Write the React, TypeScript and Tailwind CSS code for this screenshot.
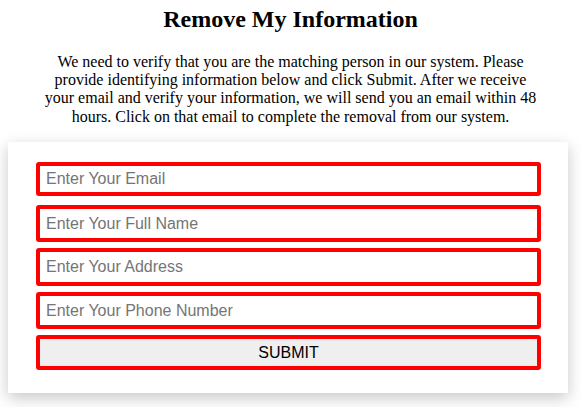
export default function App() {
  return (
    <div className="min-h-[407px] bg-white text-black" style={{ fontFamily: '"Liberation Serif", "Times New Roman", serif' }}>
      <h1 className="pt-[6px] text-center text-[24px] font-bold leading-[27.6px]">Remove My Information</h1>
      <p className="mx-auto mt-[19px] w-[505px] text-center text-[16px] leading-[18.4px]">
        We need to verify that you are the matching person in our system. Please provide identifying information below and click Submit. After we receive your email and verify your information, we will send you an email within 48 hours. Click on that email to complete the removal from our system.
      </p>
      <form
        className="ml-[8px] mt-[16px] flex w-[560px] flex-col bg-white px-[28px] pb-[23px] pt-[20px] shadow-[0_5px_15px_rgba(0,0,0,0.22)]"
        style={{ fontFamily: '"Liberation Sans", Arial, sans-serif' }}
        onSubmit={(e) => e.preventDefault()}
      >
        <input
          type="email"
          placeholder="Enter Your Email"
          className="h-[34px] w-[505px] rounded-[3px] border-4 border-[#ff0000] px-[6px] text-[16px] placeholder:text-[#757575] outline-none"
        />
        <input
          type="text"
          placeholder="Enter Your Full Name"
          className="mt-[9px] h-[37px] w-[505px] rounded-[3px] border-4 border-[#ff0000] px-[6px] text-[16px] placeholder:text-[#757575] outline-none"
        />
        <input
          type="text"
          placeholder="Enter Your Address"
          className="mt-[6px] h-[38px] w-[505px] rounded-[3px] border-4 border-[#ff0000] px-[6px] text-[16px] placeholder:text-[#757575] outline-none"
        />
        <input
          type="tel"
          placeholder="Enter Your Phone Number"
          className="mt-[6px] h-[37px] w-[505px] rounded-[3px] border-4 border-[#ff0000] px-[6px] text-[16px] placeholder:text-[#757575] outline-none"
        />
        <button
          type="submit"
          className="mt-[6px] h-[35px] w-[505px] rounded-[3px] border-4 border-[#ff0000] bg-[#efefef] text-[16px] text-black"
        >
          SUBMIT
        </button>
      </form>
    </div>
  );
}
